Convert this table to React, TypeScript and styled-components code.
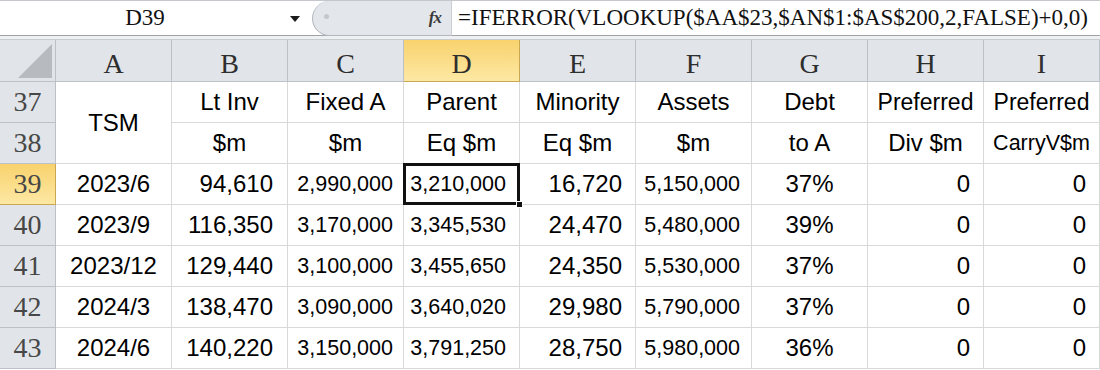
import React from 'react';
import styled, { createGlobalStyle, css } from 'styled-components';

const GlobalStyle = createGlobalStyle`
  html, body {
    margin: 0;
    padding: 0;
    background: #ffffff;
    overflow: hidden;
  }
`;

const Window = styled.div`
  width: 1100px;
  height: 370px;
  overflow: hidden;
  background: #ffffff;
`;

/* ---------- formula bar ---------- */

const FormulaBar = styled.div`
  display: flex;
  height: 34px;
  border-top: 1px solid #c4c7cc;
  border-bottom: 1px solid #9da3ab;
  background: #ffffff;
`;

const NameBox = styled.div`
  position: relative;
  display: flex;
  align-items: center;
  justify-content: center;
  width: 310px;
  padding-right: 20px;
  box-sizing: border-box;
  font-family: 'Liberation Serif', serif;
  font-size: 23px;
  color: #111111;
`;

const DropArrow = styled.span`
  position: absolute;
  right: 10px;
  top: 15px;
  width: 0;
  height: 0;
  border-left: 5px solid transparent;
  border-right: 5px solid transparent;
  border-top: 6px solid #1c1c1c;
`;

const FxPill = styled.div`
  position: relative;
  display: flex;
  align-items: center;
  justify-content: flex-end;
  width: 140px;
  margin: 0 0 -1px 2px;
  padding-right: 10px;
  box-sizing: border-box;
  background: #e3e6ea;
  border: 1px solid #b3b8bf;
  border-right: 1px solid #c9cdd2;
  border-top: none;
  border-radius: 18px 0 0 18px;
`;

const Dot = styled.span`
  position: absolute;
  left: 11px;
  top: 13px;
  width: 5px;
  height: 5px;
  border-radius: 50%;
  background: #c3c7cc;
`;

const FxLabel = styled.span`
  font-family: 'Liberation Serif', serif;
  font-style: italic;
  font-weight: bold;
  font-size: 17px;
  color: #3a3a3a;
  letter-spacing: -1px;
`;

const FormulaInput = styled.div`
  flex: 1;
  display: flex;
  align-items: center;
  padding-left: 6px;
  font-family: 'Liberation Serif', serif;
  font-size: 23px;
  color: #111111;
  white-space: nowrap;
`;

const Band = styled.div`
  height: 3px;
  background: #eef0f2;
  border-bottom: 1px solid #c7cbd0;
`;

/* ---------- sheet grid ---------- */

const Sheet = styled.div`
  display: grid;
  grid-template-columns: 56px repeat(9, 116px);
  grid-template-rows: 42px repeat(7, 41px);
`;

const headerBase = css<{ $active?: boolean }>`
  display: flex;
  align-items: center;
  justify-content: center;
  box-sizing: border-box;
  font-family: 'Liberation Serif', serif;
  background: ${(p) => (p.$active ? 'linear-gradient(#f8d26d, #fde8a4)' : '#e1e4e8')};
  border-right: 1px solid ${(p) => (p.$active ? '#c9a851' : '#bcc1c8')};
  border-bottom: 1px solid ${(p) => (p.$active ? '#c9a851' : '#bcc1c8')};
`;

const Corner = styled.div`
  ${headerBase};
  position: relative;
`;

const CornerTriangle = styled.span`
  position: absolute;
  right: 3px;
  bottom: 3px;
  width: 0;
  height: 0;
  border-left: 34px solid transparent;
  border-bottom: 34px solid #b7bbc0;
`;

const ColHeader = styled.div<{ $active?: boolean }>`
  ${headerBase};
  padding-top: 7px;
  font-size: 28px;
  color: #2e2e2e;
`;

const RowHeader = styled.div<{ $active?: boolean }>`
  ${headerBase};
  font-size: 28px;
  color: #474747;
`;

type Align = 'left' | 'center' | 'right';

const Cell = styled.div<{ $align?: Align; $pad?: number; $size?: number; $selected?: boolean }>`
  position: relative;
  display: flex;
  align-items: center;
  justify-content: ${(p) => (p.$align === 'right' ? 'flex-end' : p.$align === 'left' ? 'flex-start' : 'center')};
  padding-right: ${(p) => (p.$align === 'right' ? p.$pad ?? 14 : 0)}px;
  box-sizing: border-box;
  border-right: 1px solid #d9d9d9;
  border-bottom: 1px solid #d9d9d9;
  font-family: 'Liberation Sans', Arial, sans-serif;
  font-size: ${(p) => p.$size ?? 24}px;
  color: #000000;
  white-space: nowrap;
  ${(p) =>
    p.$selected &&
    css`
      z-index: 2;
      &::after {
        content: '';
        position: absolute;
        top: -1px;
        left: -1px;
        right: -1px;
        bottom: -1px;
        border: 3px solid #111111;
        pointer-events: none;
      }
    `}
`;

const MergedCell = styled(Cell)`
  grid-row: 2 / span 2;
  grid-column: 2;
`;

const FillHandle = styled.span`
  position: absolute;
  right: -4px;
  bottom: -4px;
  width: 5px;
  height: 5px;
  background: #111111;
  border: 1px solid #ffffff;
  z-index: 3;
`;

type ColSpec = { align: Align; pad?: number; size?: number };

const columns = ['A', 'B', 'C', 'D', 'E', 'F', 'G', 'H', 'I'];

const dataCols: ColSpec[] = [
  { align: 'center' },
  { align: 'right', pad: 14 },
  { align: 'right', pad: 10, size: 21.5 },
  { align: 'right', pad: 13, size: 21.5 },
  { align: 'right', pad: 13 },
  { align: 'right', pad: 11, size: 21.5 },
  { align: 'center' },
  { align: 'right', pad: 13 },
  { align: 'right', pad: 13 },
];

const titleRow = ['Lt Inv', 'Fixed A', 'Parent', 'Minority', 'Assets', 'Debt', 'Preferred', 'Preferred'];
const unitRow = ['$m', '$m', 'Eq $m', 'Eq $m', '$m', 'to A', 'Div $m', 'CarryV$m'];
const titleSizes = [24, 24, 24, 24, 24, 24, 23, 23];
const unitSizes = [24, 24, 24, 24, 24, 24, 24, 21.5];

const rows = [
  ['2023/6', '94,610', '2,990,000', '3,210,000', '16,720', '5,150,000', '37%', '0', '0'],
  ['2023/9', '116,350', '3,170,000', '3,345,530', '24,470', '5,480,000', '39%', '0', '0'],
  ['2023/12', '129,440', '3,100,000', '3,455,650', '24,350', '5,530,000', '37%', '0', '0'],
  ['2024/3', '138,470', '3,090,000', '3,640,020', '29,980', '5,790,000', '37%', '0', '0'],
  ['2024/6', '140,220', '3,150,000', '3,791,250', '28,750', '5,980,000', '36%', '0', '0'],
];

const App = () => {
  return (
    <Window>
      <GlobalStyle />
      <FormulaBar>
        <NameBox>
          D39
          <DropArrow />
        </NameBox>
        <FxPill>
          <Dot />
          <FxLabel>fx</FxLabel>
        </FxPill>
        <FormulaInput>=IFERROR(VLOOKUP($AA$23,$AN$1:$AS$200,2,FALSE)+0,0)</FormulaInput>
      </FormulaBar>
      <Band />
      <Sheet>
        <Corner>
          <CornerTriangle />
        </Corner>
        { columns.map((c) => (
          <ColHeader key={ c } $active={ c === 'D' }>{ c }</ColHeader>
        )) }

        <RowHeader>37</RowHeader>
        <MergedCell>TSM</MergedCell>
        { titleRow.map((t, i) => (
          <Cell key={ `t${i}` } $size={ titleSizes[i] }>{ t }</Cell>
        )) }

        <RowHeader>38</RowHeader>
        { unitRow.map((t, i) => (
          <Cell key={ `u${i}` } $size={ unitSizes[i] }>{ t }</Cell>
        )) }

        { rows.map((r, ri) => (
          <React.Fragment key={ r[0] }>
            <RowHeader $active={ ri === 0 }>{ 39 + ri }</RowHeader>
            { r.map((v, ci) => {
              const spec = dataCols[ci];
              const selected = ri === 0 && ci === 3;
              return (
                <Cell
                  key={ ci }
                  $align={ spec.align }
                  $pad={ spec.pad }
                  $size={ spec.size }
                  $selected={ selected }
                >
                  { v }
                  { selected && <FillHandle /> }
                </Cell>
              );
            }) }
          </React.Fragment>
        )) }
      </Sheet>
    </Window>
  );
};

export default App;
